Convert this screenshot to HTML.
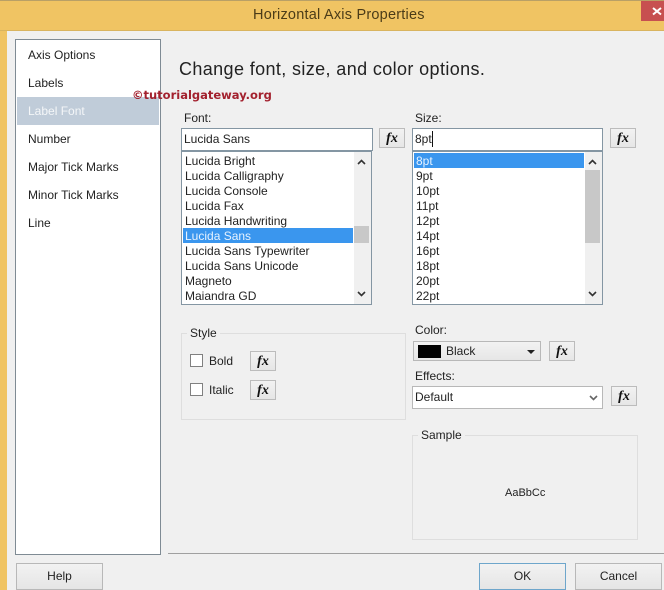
<!DOCTYPE html>
<html><head><meta charset="utf-8"><style>
html,body{margin:0;padding:0}
body{width:664px;height:590px;overflow:hidden;position:relative;background:#f0f0f0;font-family:"Liberation Sans",sans-serif;font-size:12px;color:#222}
.a,.t,.fx,.btn{position:absolute;box-sizing:border-box}
.t{white-space:nowrap;line-height:16px;height:16px}
.fx{width:26px;height:20px;border:1px solid #bcbcbc;background:linear-gradient(#f2f2f2,#e6e6e6);font:italic bold 14px/19px "Liberation Serif",serif;text-align:center;color:#111}
.btn{height:27px;width:87px;border:1px solid #b8b8b8;background:linear-gradient(#f2f2f2,#e5e5e5);text-align:center;line-height:25px;color:#222}
.box{background:#fff;border:1px solid #8496a3}
.grp{border:1px solid #dedede}
.leg{background:#f0f0f0;padding:0 3px}
.cb{width:13px;height:13px;background:#fff;border:1px solid #808080}
svg{position:absolute;overflow:visible}
</style></head><body>
<div class="a" style="left:0;top:0;width:664px;height:31px;background:#f0c463;border-top:1px solid #b9a066;border-bottom:1px solid #d9b45f"></div>
<div class="a" style="left:0;top:31px;width:7px;height:559px;background:#f0c463"></div>
<div class="a" style="left:641px;top:1px;width:23px;height:20px;background:#c75050"></div>
<svg style="left:0;top:0" width="664" height="31"><path d="M653 8l8 6.500M661 8l-8 6.500" stroke="#fff" stroke-width="2"/></svg>
<div class="t" style="left:253px;top:7px;font-size:14.5px;color:#4b3c18;letter-spacing:.22px">Horizontal Axis Properties</div>

<div class="a box" style="left:15px;top:39px;width:146px;height:516px;border-color:#7f8b94"></div>
<div class="a" style="left:17px;top:97px;width:142px;height:28px;background:#c0ccd9"></div>
<div class="t" style="left:28px;top:47px">Axis Options</div>
<div class="t" style="left:28px;top:75px">Labels</div>
<div class="t" style="left:28px;top:103px;color:#f4f6f8">Label Font</div>
<div class="t" style="left:28px;top:131px">Number</div>
<div class="t" style="left:28px;top:159px">Major Tick Marks</div>
<div class="t" style="left:28px;top:187px">Minor Tick Marks</div>
<div class="t" style="left:28px;top:215px">Line</div>

<div class="t" style="left:179px;top:58px;font-size:18px;line-height:22px;height:22px;color:#222;letter-spacing:.38px">Change font, size, and color options.</div>
<div class="t" style="left:132px;top:87px;font:bold 11.5px/16px 'DejaVu Sans',sans-serif;color:#a3212e;letter-spacing:0">©tutorialgateway.org</div>

<div class="t" style="left:184px;top:110px">Font:</div>
<div class="a box" style="left:181px;top:128px;width:192px;height:23px"></div>
<div class="t" style="left:184px;top:131px">Lucida Sans</div>
<div class="fx" style="left:379px;top:128px">fx</div>

<div class="a box" style="left:181px;top:151px;width:191px;height:154px"></div>
<div class="a" style="left:354px;top:152px;width:17px;height:152px;background:#f0f0f0"></div>
<div class="a" style="left:354px;top:226px;width:15px;height:17px;background:#c8c8c8"></div>
<div class="a" style="left:183px;top:228px;width:170px;height:15px;background:#3a96ee"></div>
<div class="t" style="left:185px;top:153px">Lucida Bright</div>
<div class="t" style="left:185px;top:168px">Lucida Calligraphy</div>
<div class="t" style="left:185px;top:183px">Lucida Console</div>
<div class="t" style="left:185px;top:198px">Lucida Fax</div>
<div class="t" style="left:185px;top:213px">Lucida Handwriting</div>
<div class="t" style="left:185px;top:228px;color:#e6f2ff">Lucida Sans</div>
<div class="t" style="left:185px;top:243px">Lucida Sans Typewriter</div>
<div class="t" style="left:185px;top:258px">Lucida Sans Unicode</div>
<div class="t" style="left:185px;top:273px">Magneto</div>
<div class="t" style="left:185px;top:288px">Maiandra GD</div>

<div class="t" style="left:415px;top:110px">Size:</div>
<div class="a box" style="left:412px;top:128px;width:191px;height:23px"></div>
<div class="t" style="left:415px;top:131px">8pt</div>
<div class="a" style="left:432px;top:131px;width:1px;height:16px;background:#111"></div>
<div class="fx" style="left:610px;top:128px">fx</div>

<div class="a box" style="left:412px;top:151px;width:191px;height:154px"></div>
<div class="a" style="left:585px;top:152px;width:17px;height:152px;background:#f0f0f0"></div>
<div class="a" style="left:585px;top:170px;width:15px;height:73px;background:#c8c8c8"></div>
<div class="a" style="left:414px;top:153px;width:170px;height:15px;background:#3a96ee"></div>
<div class="t" style="left:416px;top:153px;color:#e6f2ff">8pt</div>
<div class="t" style="left:416px;top:168px">9pt</div>
<div class="t" style="left:416px;top:183px">10pt</div>
<div class="t" style="left:416px;top:198px">11pt</div>
<div class="t" style="left:416px;top:213px">12pt</div>
<div class="t" style="left:416px;top:228px">14pt</div>
<div class="t" style="left:416px;top:243px">16pt</div>
<div class="t" style="left:416px;top:258px">18pt</div>
<div class="t" style="left:416px;top:273px">20pt</div>
<div class="t" style="left:416px;top:288px">22pt</div>

<div class="a grp" style="left:181px;top:333px;width:225px;height:87px"></div>
<div class="t leg" style="left:187px;top:325px">Style</div>
<div class="a cb" style="left:190px;top:354px"></div>
<div class="t" style="left:209px;top:353px">Bold</div>
<div class="fx" style="left:250px;top:351px">fx</div>
<div class="a cb" style="left:190px;top:383px"></div>
<div class="t" style="left:209px;top:382px">Italic</div>
<div class="fx" style="left:250px;top:380px">fx</div>

<div class="t" style="left:415px;top:322px">Color:</div>
<div class="a" style="left:413px;top:341px;width:128px;height:20px;border:1px solid #b8b8b8;background:linear-gradient(#f2f2f2,#e6e6e6)"></div>
<div class="a" style="left:418px;top:345px;width:23px;height:13px;background:#000"></div>
<div class="t" style="left:446px;top:343px">Black</div>
<div class="fx" style="left:549px;top:341px">fx</div>

<div class="t" style="left:415px;top:368px">Effects:</div>
<div class="a" style="left:412px;top:386px;width:191px;height:23px;background:#fff;border:1px solid #b8b8b8"></div>
<div class="t" style="left:415px;top:389px">Default</div>
<div class="fx" style="left:611px;top:386px">fx</div>

<div class="a grp" style="left:412px;top:435px;width:226px;height:105px"></div>
<div class="t leg" style="left:418px;top:427px">Sample</div>
<div class="t" style="left:505px;top:485px;font-size:11px">AaBbCc</div>

<div class="a" style="left:168px;top:553px;width:496px;height:1px;background:#a0a0a0"></div>
<div class="btn" style="left:16px;top:563px">Help</div>
<div class="btn" style="left:479px;top:563px;border-color:#6ea6cb">OK</div>
<div class="btn" style="left:575px;top:563px">Cancel</div>

<svg style="left:0;top:0" width="664" height="590" fill="none" stroke="#333" stroke-width="1.600"><path d="M358 164l3.500-3.500 3.500 3.500M358 292l3.500 3.500 3.500-3.500M589 164l3.500-3.500 3.500 3.500M589 292l3.500 3.500 3.500-3.500"/><path d="M590 396l3.500 3.500 3.500-3.500" stroke="#666"/><path d="M527 350h8l-4 4z" fill="#222" stroke="none"/></svg>
</body></html>
